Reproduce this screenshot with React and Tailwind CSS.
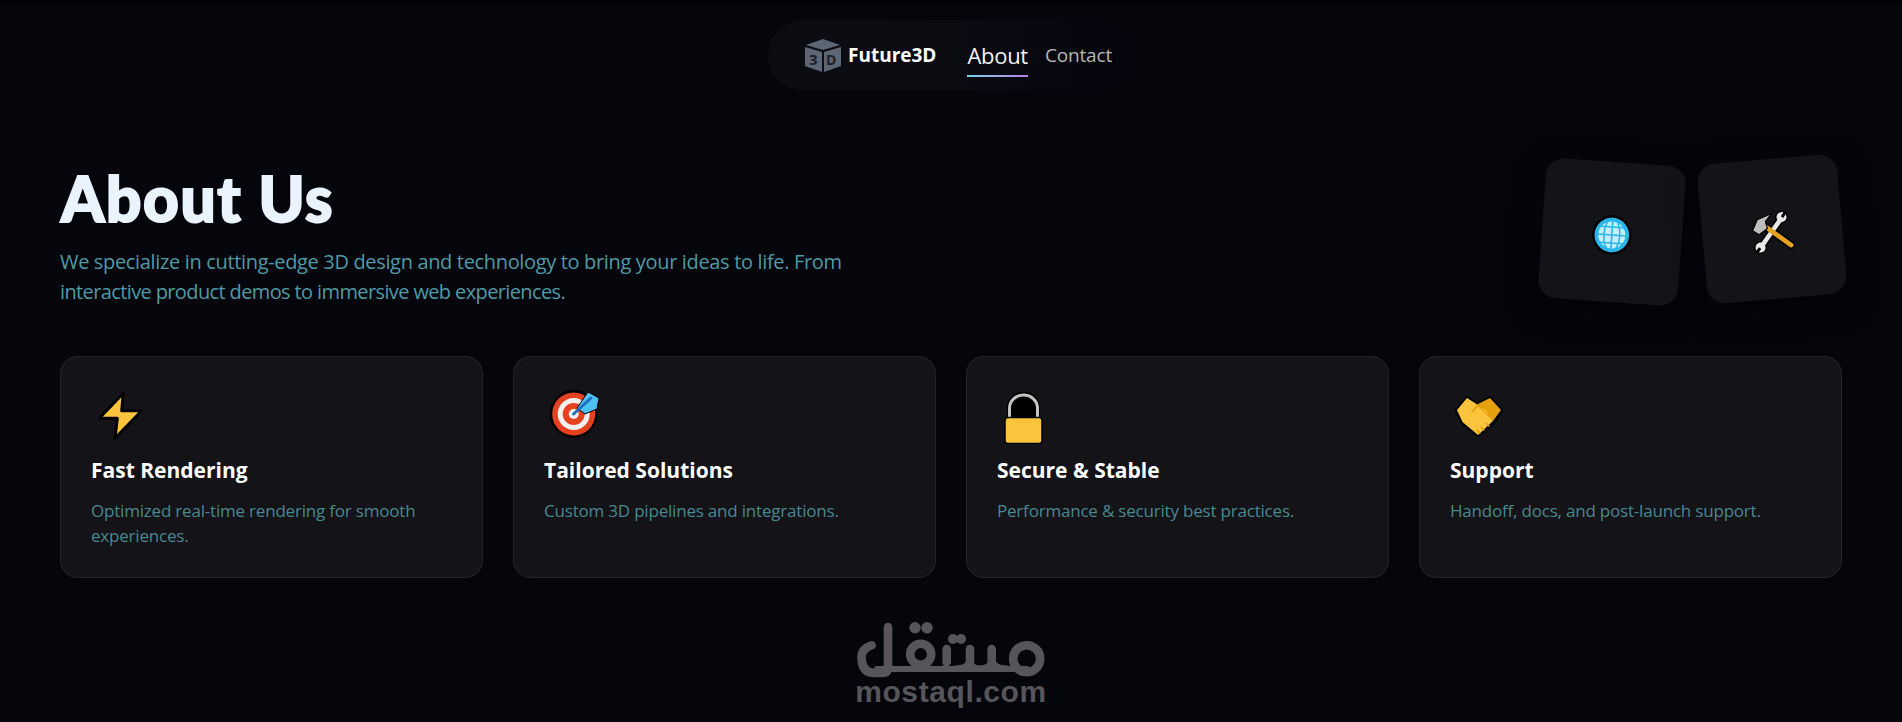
const font = { fontFamily: '"Open Sans", "Noto Sans", sans-serif' }

function Bolt() {
  return (
    <svg viewBox="0 0 54 54" className="w-[54px] h-[54px]">
      <path d="M32.3 3.3 L8.3 28.3 H26.3 L24 48.3 L50.7 20.7 H30.7 Z" fill="#fcc43d" stroke="#000" strokeWidth="3" strokeLinejoin="round" />
    </svg>
  )
}

function Target() {
  return (
    <svg viewBox="0 0 54 54" className="w-[54px] h-[54px] overflow-visible">
      <circle cx="29.7" cy="24" r="24" fill="#000" />
      <circle cx="29.7" cy="24" r="21.5" fill="#e6411f" />
      <circle cx="29.7" cy="24" r="16" fill="#f3f0ee" />
      <circle cx="29.7" cy="24" r="11" fill="#e6411f" />
      <circle cx="29.7" cy="24" r="5" fill="#f3f0ee" />
      <path d="M33 18 L44 2 L55 8 L53 19 L41 24 Z" fill="#4cc2f1" stroke="#000" strokeWidth="1" strokeLinejoin="round" />
      <path d="M29.5 24 L47 8" stroke="#1d6fc0" strokeWidth="3" strokeLinecap="round" />
    </svg>
  )
}

function Lock() {
  return (
    <svg viewBox="0 0 54 54" className="w-[54px] h-[54px]">
      <path d="M10 30 V17 a16 15 0 0 1 33 0 V30 Z" fill="#000" />
      <path d="M12.5 28 V18 a14 13 0 0 1 28 0 V28" fill="none" stroke="#c4c4c4" strokeWidth="3" />
      <rect x="8" y="27.5" width="37" height="26" rx="3" fill="#fcc43d" stroke="#000" strokeWidth="1.5" />
    </svg>
  )
}

function Handshake() {
  return (
    <svg viewBox="0 0 54 54" className="w-[54px] h-[54px]">
      <path d="M6 20 L17 7 L28 14 L40 7 L52 20 L44 33 L28 46 L12 33 Z" fill="#000" stroke="#000" strokeWidth="2.5" strokeLinejoin="round" />
      <path d="M28 14 L40 8 L51 20 L43 31 Z" fill="#e3a008" />
      <path d="M7 20 L17 8 L28 15 L36 20 L43 31 L28 45 L12.5 32 Z" fill="#fcc43d" />
      <path d="M22 22 L28 15 L43 30" fill="none" stroke="#e3a008" strokeWidth="1.6" />
      <path d="M36 33 L39 36 M31 37 L34 40 M27 40 L30 43" stroke="#e3a008" strokeWidth="1.6" strokeLinecap="round" />
    </svg>
  )
}

function Globe() {
  return (
    <svg viewBox="0 0 40 40" className="w-[40px] h-[40px]">
      <circle cx="20" cy="20" r="18.5" fill="#29b6ea" stroke="#000" strokeWidth="2.5" />
      <circle cx="20" cy="20" r="13.5" fill="#c5eefb" />
      <g fill="none" stroke="#29b6ea" strokeWidth="1.6">
        <ellipse cx="20" cy="20" rx="8" ry="16.5" />
        <path d="M20 3 V37 M3 20 H37 M6 12 H34 M6 28 H34" />
      </g>
    </svg>
  )
}

function Tools() {
  return (
    <svg viewBox="0 0 44 44" className="w-[44px] h-[44px]">
      <g stroke="#000" strokeWidth="8" strokeLinecap="round" fill="none">
        <path d="M9 36.7 L32 9.3" />
        <path d="M13.7 14.3 L39.7 36.7" />
      </g>
      <circle cx="32.5" cy="8" r="6.5" fill="#000" />
      <circle cx="9" cy="36.5" r="6.5" fill="#000" />
      <path d="M9 36.7 L32 9.3" stroke="#e8e8e8" strokeWidth="4.6" strokeLinecap="round" />
      <circle cx="32.5" cy="8" r="5" fill="#e8e8e8" />
      <circle cx="9" cy="36.5" r="5" fill="#e8e8e8" />
      <path d="M33 8 L37 3 M8.5 37 L5 41" stroke="#000" strokeWidth="3" />
      <path d="M13.7 14.3 L39.7 36.7" stroke="#e5a21a" strokeWidth="4.6" strokeLinecap="round" />
      <path d="M2.5 19 L8 8.5 L23 3.5 L16 11 L17.5 18 L8.7 23.5 Z" fill="#bdbdbd" stroke="#000" strokeWidth="1.2" strokeLinejoin="round" />
    </svg>
  )
}

function CubeLogo() {
  return (
    <svg viewBox="0 0 36 33" className="w-[36px] h-[33px]">
      <path d="M18 0 L35 6 L18 11 L1 6 Z" fill="#5d6674" />
      <path d="M0 8 L17 13 V33 L0 27 Z" fill="#5d6674" />
      <path d="M36 8 L19 13 V33 L36 27 Z" fill="#5d6674" />
      <text x="4" y="26" fontSize="15" fontWeight="700" fill="#1d2027" fontFamily="Open Sans">3</text>
      <text x="21" y="26" fontSize="14" fontWeight="700" fill="#1d2027" fontFamily="Open Sans">D</text>
    </svg>
  )
}

function MostaqlLogo() {
  return (
    <svg viewBox="0 0 188 56" className="w-[188px] h-[56px]" fill="none" stroke="#55555a" strokeLinecap="round">
      <g strokeWidth="8.6">
        <path d="M14.7 23.3 Q4 27 4.5 36 Q5 51 18 51 H26 Q31 51 31 44 V5" />
        <circle cx="63.7" cy="32.3" r="10.5" />
        <circle cx="169.7" cy="36.7" r="13.5" />
        <path d="M89.7 27 V40 M113 27 V40 M134.7 27 V40" />
      </g>
      <path d="M20 47 H170" strokeWidth="6" />
      <path d="M86 46 Q90 46 90 40 M98 46 Q112 46 113 36 Q114 46 122 46 Q134 46 135 36 Q136 46 150 46" strokeWidth="5" />
      <g fill="#55555a" stroke="none">
        <circle cx="58" cy="5.7" r="5.7" />
        <circle cx="70" cy="5.7" r="5.7" />
        <circle cx="96" cy="17" r="5" />
        <circle cx="104" cy="17" r="5" />
      </g>
    </svg>
  )
}

const cards = [
  { icon: <Bolt />, title: "Fast Rendering", text: "Optimized real-time rendering for smooth experiences." },
  { icon: <Target />, title: "Tailored Solutions", text: "Custom 3D pipelines and integrations." },
  { icon: <Lock />, title: "Secure & Stable", text: "Performance & security best practices." },
  { icon: <Handshake />, title: "Support", text: "Handoff, docs, and post-launch support." },
]

export default function App() {
  return (
    <div style={font} className="h-[722px] bg-[#05050c] border-t-2 border-[#020205] overflow-hidden flex flex-col">
      <div className="flex justify-center pt-[18px]">
        <nav className="h-[70px] w-[364px] ml-[-2px] rounded-[35px] bg-gradient-to-r from-[#0c0c13] via-[#0b0b12] to-[#05050c] flex items-center pl-[37px]">
          <CubeLogo />
          <span className="ml-[7px] text-[19px] font-bold text-white">Future3D</span>
          <a className="ml-[31px] relative text-[22px] text-[#f2f4f8] tracking-[-0.3px]">
            About
            <span className="absolute left-0 right-0 bottom-[-5px] h-[2px] bg-gradient-to-r from-[#6fd3e8] to-[#b57be6]" />
          </a>
          <a className="ml-[17px] text-[19px] text-[#b4b6bb] tracking-[-0.15px]">Contact</a>
        </nav>
      </div>

      <header className="flex justify-between items-start pl-[60px] pr-[60px] mt-[64px]">
        <div className="pt-[8px]">
          <h1 className="pl-[1px] text-[62px] leading-[72px] font-black tracking-[1.6px] text-[#eaf4ff] [-webkit-text-stroke:2px_#eaf4ff]" style={{ fontFamily: 'Lato, sans-serif' }}>About Us</h1>
          <p className="mt-[13px] w-[820px] text-[20px] leading-[30px] text-[#4f9aa5] tracking-[-0.34px]">
            <span className="block">We specialize in cutting-edge 3D design and technology to bring your ideas to life. From</span>
            <span className="block tracking-[-0.62px]">interactive product demos to immersive web experiences.</span>
          </p>
        </div>
        <div className="flex items-start gap-[20px]">
          <div className="mt-[8px] w-[140px] h-[140px] rounded-[18px] bg-[#131318] rotate-[4deg] flex items-center justify-center shadow-[0_10px_30px_rgba(0,0,0,0.5)]">
            <div className="mt-[6px]"><Globe /></div>
          </div>
          <div className="mt-[5px] w-[140px] h-[140px] rounded-[18px] bg-[#131318] rotate-[-5deg] flex items-center justify-center shadow-[0_10px_30px_rgba(0,0,0,0.5)]">
            <div className="mt-[6px]"><Tools /></div>
          </div>
        </div>
      </header>

      <section className="grid grid-cols-4 gap-[30px] px-[60px] mt-[49px]">
        {cards.map((card) => (
          <div key={card.title} className="h-[222px] rounded-[18px] border border-white/[0.07] bg-[#131318] px-[30px] pt-[33px]">
            {card.icon}
            <h3 className="mt-[12px] text-[21px] leading-[28px] font-bold text-white">{card.title}</h3>
            <p className="mt-[14px] text-[17px] leading-[25px] text-[#4a8890] tracking-[-0.2px]">{card.text}</p>
          </div>
        ))}
      </section>

      <div className="flex flex-col items-center mt-[44px]">
        <MostaqlLogo />
        <span className="mt-[-1px] text-[30px] leading-[30px] font-bold text-[#55555a] tracking-[0.6px]" style={{ fontFamily: '"Liberation Sans", sans-serif' }}>mostaql.com</span>
      </div>
    </div>
  )
}
